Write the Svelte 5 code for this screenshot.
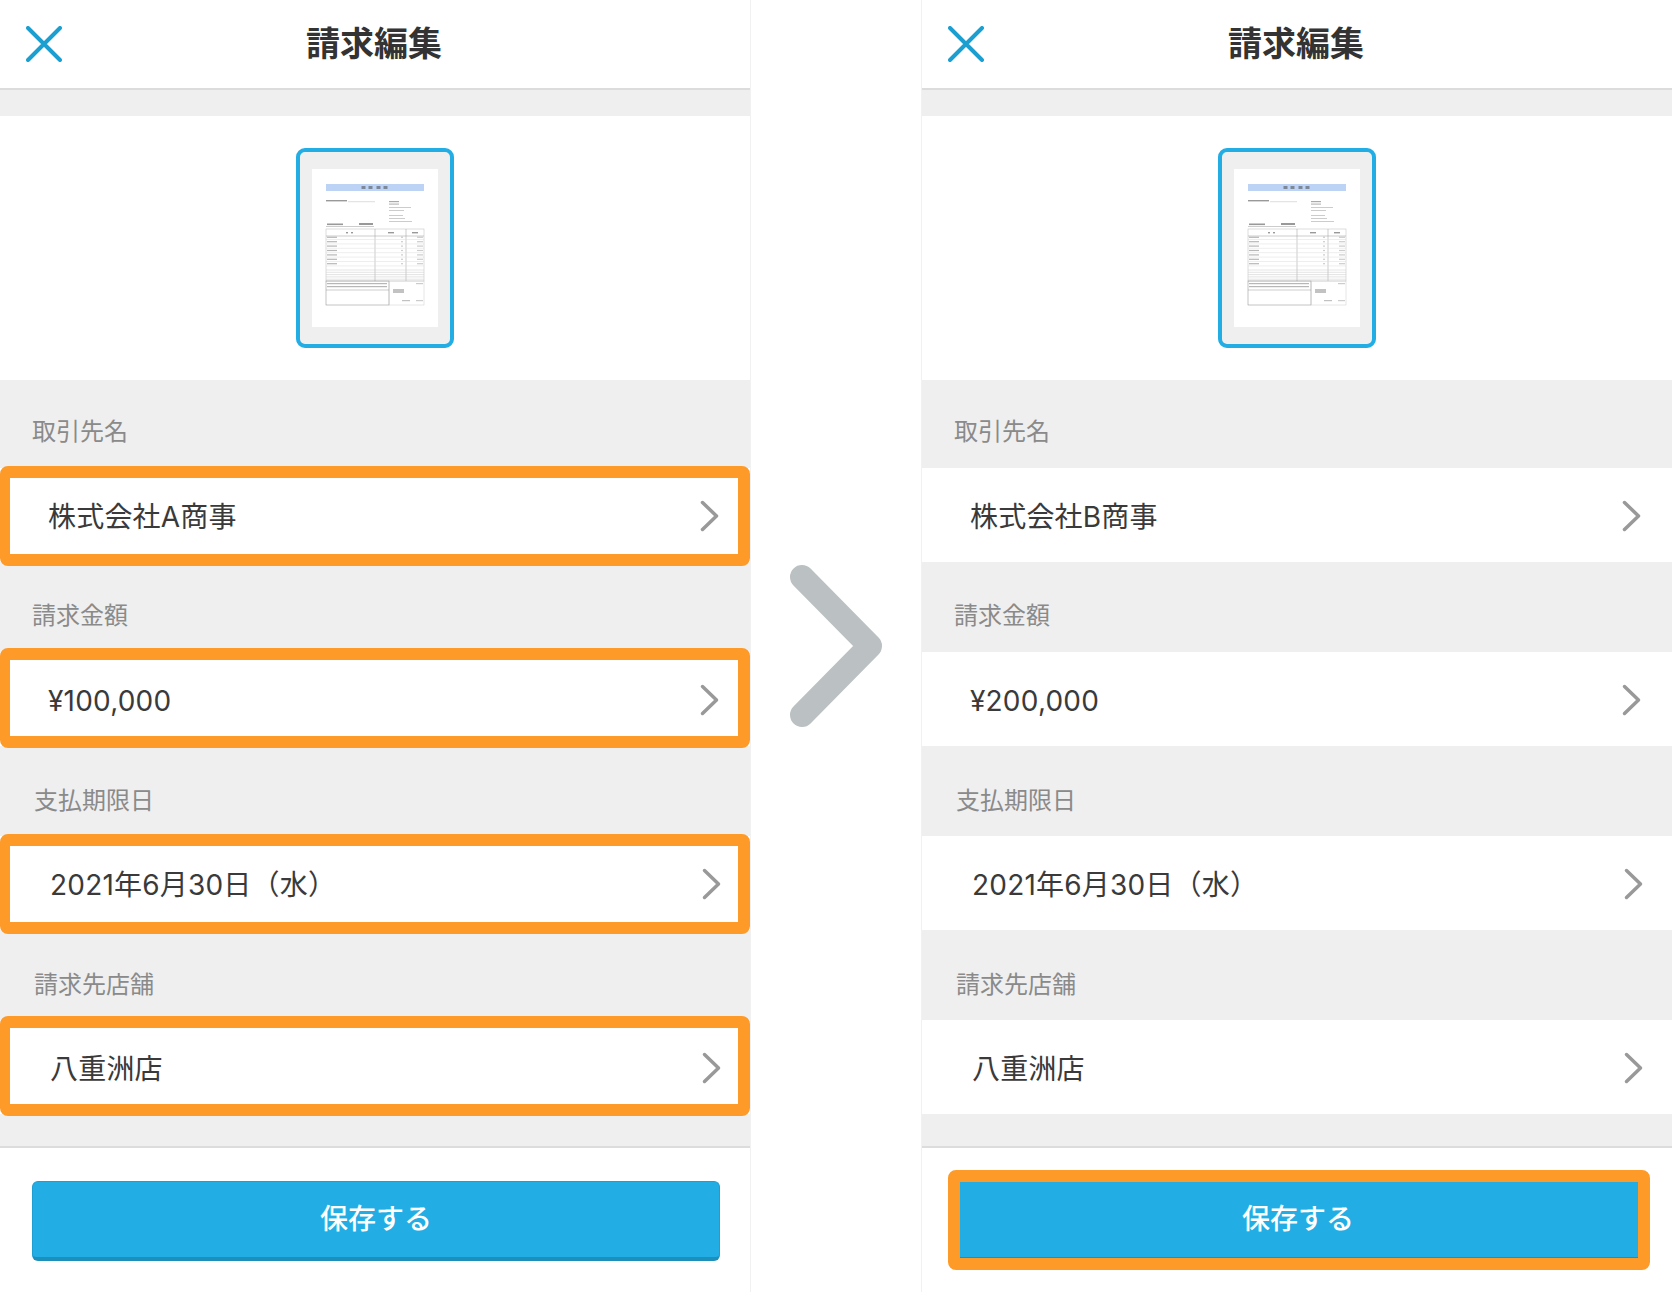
<script lang="ts">
	const panels = [
		{
			company: '株式会社A商事',
			amount: '¥100,000',
			highlightFields: true,
			highlightSave: false
		},
		{
			company: '株式会社B商事',
			amount: '¥200,000',
			highlightFields: false,
			highlightSave: true
		}
	];

	// the highlight boxes sit a little unevenly over their rows
	function getFields(panel: (typeof panels)[number]) {
		return [
			{ label: '取引先名', value: panel.company, indented: false, markTop: -2 },
			{ label: '請求金額', value: panel.amount, indented: false, markTop: -4 },
			{ label: '支払期限日', value: '2021年6月30日（水）', indented: true, markTop: -2 },
			{ label: '請求先店舗', value: '八重洲店', indented: true, markTop: -4 }
		];
	}

	const itemRows = Array.from({ length: 7 }, (_, i) => 70.5 + i * 4.4);
	const blankRows = Array.from({ length: 5 }, (_, i) => 101 + i * 2.3);
</script>

{#snippet invoiceThumb()}
	<svg class="invoice" viewBox="0 0 126 158" width="126" height="158" aria-hidden="true">
		<rect x="14" y="15" width="98" height="7" fill="#bcd3f5" />
		<g fill="#7c8798">
			<rect x="49.5" y="17" width="4" height="3" />
			<rect x="56.5" y="17" width="4" height="3" />
			<rect x="64.5" y="17" width="4" height="3" />
			<rect x="71.5" y="17" width="4" height="3" />
		</g>
		<rect x="14" y="31" width="21" height="1.4" fill="#999" />
		<rect x="36" y="32.6" width="27" height="0.5" fill="#bbb" />
		<rect x="77" y="32" width="10" height="1.2" fill="#aaa" />
		<rect x="77" y="34.5" width="10" height="1.2" fill="#bbb" />
		<rect x="77" y="38" width="22" height="1" fill="#ccc" />
		<rect x="77" y="41" width="15" height="1" fill="#ccc" />
		<rect x="77" y="46" width="14" height="1" fill="#ccc" />
		<rect x="77" y="49" width="16" height="1" fill="#ccc" />
		<rect x="77" y="52" width="23" height="1" fill="#ccc" />
		<rect x="15" y="54.5" width="16" height="1.6" fill="#999" />
		<rect x="47" y="54" width="14" height="2" fill="#999" />
		<rect x="14" y="57" width="48" height="0.6" fill="#aaa" />

		<g fill="none" stroke="#bdbdbd" stroke-width="0.5">
			<rect x="14" y="60" width="98" height="52" />
			<line x1="63" y1="60" x2="63" y2="112" stroke="#999" />
			<line x1="94" y1="60" x2="94" y2="112" stroke="#999" />
			<line x1="14" y1="67" x2="112" y2="67" stroke="#999" />
			{#each itemRows as y}
				<line x1="14" y1={y} x2="112" y2={y} stroke="#dcdcdc" />
			{/each}
			{#each blankRows as y}
				<line x1="14" y1={y} x2="112" y2={y} stroke="#c8c8c8" />
			{/each}
			<rect x="14" y="112" width="63" height="24" stroke="#888" />
			<rect x="77" y="112" width="35" height="24" stroke="#ccc" />
			<line x1="14" y1="121" x2="77" y2="121" stroke="#999" />
		</g>
		<g fill="#999">
			<rect x="34" y="63" width="2" height="1.4" />
			<rect x="39" y="63" width="2" height="1.4" />
			<rect x="76" y="63" width="6" height="1.4" />
			<rect x="100" y="63" width="6" height="1.4" />
			{#each itemRows as y}
				<rect x="15" y={y - 2.8} width="10" height="1.2" opacity="0.7" />
				<rect x="89" y={y - 2.8} width="2" height="1.2" opacity="0.5" />
				<rect x="105" y={y - 2.8} width="6" height="1.2" opacity="0.5" />
			{/each}
			<rect x="15" y="114" width="60" height="1.2" opacity="0.7" />
			<rect x="15" y="117" width="60" height="1.2" opacity="0.7" />
			<rect x="104" y="114" width="7" height="1.2" opacity="0.5" />
			<rect x="81" y="120" width="11" height="4" opacity="0.6" />
			<rect x="104" y="131" width="7" height="1.2" opacity="0.5" />
			<rect x="90" y="131" width="8" height="1.2" opacity="0.6" />
		</g>
	</svg>
{/snippet}

{#snippet panelView(panel: (typeof panels)[number])}
	<div class="panel">
		<header class="top-bar">
			<button class="close" aria-label="閉じる">
				<svg viewBox="0 0 36 36" width="36" height="36">
					<path d="M2 2 L34 34 M34 2 L2 34" />
				</svg>
			</button>
			<h1>請求編集</h1>
		</header>

		<div class="content">
			<div class="thumb-section">
				<div class="thumb">
					{@render invoiceThumb()}
				</div>
			</div>

			{#each getFields(panel) as field}
				<div class="field">
					<div class="field-label" class:indented={field.indented}>{field.label}</div>
					<div class="field-row" class:indented={field.indented}>
						<span class="field-value">{field.value}</span>
						<svg class="chevron" viewBox="0 0 19 32" width="19" height="32">
							<path d="M2.5 2.5 L16.5 16 L2.5 29.5" />
						</svg>
						{#if panel.highlightFields}
							<div class="mark" style:top="{field.markTop}px"></div>
						{/if}
					</div>
				</div>
			{/each}
		</div>

		<footer class="bottom-bar">
			<button class="save">
				保存する
				{#if panel.highlightSave}
					<span class="mark-save"></span>
				{/if}
			</button>
		</footer>
	</div>
{/snippet}

<div class="screens">
	{@render panelView(panels[0])}

	<div class="arrow">
		<svg viewBox="0 0 92 162" width="92" height="162">
			<path d="M12 12 L80 81 L12 150" />
		</svg>
	</div>

	{@render panelView(panels[1])}
</div>

<style>
	:global(body) {
		background: #fff;
		font-family: 'Noto Sans CJK JP', 'Noto Sans', sans-serif;
	}

	.screens {
		display: flex;
		height: 1292px;
		overflow: hidden;
	}

	.panel {
		display: flex;
		flex-direction: column;
		flex: none;
		width: 750px;
		box-shadow: 0 0 0 1px #f1f1f1;
	}

	.arrow {
		flex: 1;
		display: flex;
		align-items: center;
		padding-left: 40px;
	}

	.arrow path {
		fill: none;
		stroke: #bbc0c2;
		stroke-width: 24;
		stroke-linecap: round;
		stroke-linejoin: round;
	}

	.top-bar {
		display: grid;
		grid-template-columns: 88px 1fr 88px;
		align-items: center;
		height: 88px;
		border-bottom: 2px solid #dcdcdc;
		background: #fff;
	}

	.top-bar h1 {
		grid-column: 2;
		margin: 0;
		font-size: 34px;
		line-height: 1;
		font-weight: 700;
		color: #333;
		text-align: center;
		padding: 0 2px 4px 0;
	}

	.close {
		grid-column: 1;
		grid-row: 1;
		display: flex;
		padding: 0 0 0 26px;
		border: none;
		background: none;
	}

	.close path {
		fill: none;
		stroke: #1a9fd0;
		stroke-width: 4;
		stroke-linecap: round;
	}

	.content {
		background: #efefef;
		padding: 26px 0 32px;
	}

	.thumb-section {
		display: flex;
		align-items: center;
		justify-content: center;
		height: 264px;
		background: #fff;
	}

	.thumb {
		display: flex;
		align-items: center;
		justify-content: center;
		box-sizing: border-box;
		width: 158px;
		height: 200px;
		border: 4px solid #22aee5;
		border-radius: 9px;
		background: #efefef;
	}

	.invoice {
		display: block;
		background: #fff;
		filter: blur(0.4px);
	}

	.field-label {
		box-sizing: border-box;
		height: 90px;
		padding: 40px 0 0 32px;
		font-size: 24px;
		line-height: 24px;
		color: #8a8a8a;
	}

	.thumb-section + .field .field-label {
		height: 88px;
		padding-top: 38px;
	}

	.field-label.indented {
		padding: 41px 0 0 34px;
	}

	.field-row {
		position: relative;
		display: flex;
		align-items: center;
		justify-content: space-between;
		box-sizing: border-box;
		height: 94px;
		padding: 0 31px 0 48px;
		background: #fff;
	}

	.field-row.indented {
		padding: 0 29px 0 50px;
	}

	.field-value {
		padding-top: 4px;
		font-family: Inter, 'Noto Sans CJK JP', sans-serif;
		font-size: 28px;
		line-height: 1;
		letter-spacing: 0.2px;
		color: #3a3a3a;
	}

	.chevron {
		position: relative;
		top: 1px;
	}

	.chevron path {
		fill: none;
		stroke: #999;
		stroke-width: 3.5;
		stroke-linecap: round;
		stroke-linejoin: round;
	}

	.mark {
		position: absolute;
		left: 0;
		right: 0;
		box-sizing: border-box;
		height: 100px;
		border: 12px solid #fe9a28;
		border-left-width: 10px;
		border-radius: 8px;
	}

	.bottom-bar {
		flex: 1;
		box-sizing: border-box;
		padding: 33px 30px 0 32px;
		border-top: 2px solid #dcdcdc;
		background: #fff;
	}

	.save {
		position: relative;
		display: block;
		box-sizing: border-box;
		width: 100%;
		height: 80px;
		padding: 0 0 6px;
		border: 1px solid #1e9fd3;
		border-bottom: 4px solid #1c8fbb;
		border-radius: 6px;
		background: #22aee5;
		color: #fff;
		font-family: inherit;
		font-size: 28px;
		font-weight: 500;
	}

	.mark-save {
		position: absolute;
		inset: -12px -9px -13px -7px;
		border: 12px solid #fe9a28;
		border-radius: 8px;
	}
</style>
